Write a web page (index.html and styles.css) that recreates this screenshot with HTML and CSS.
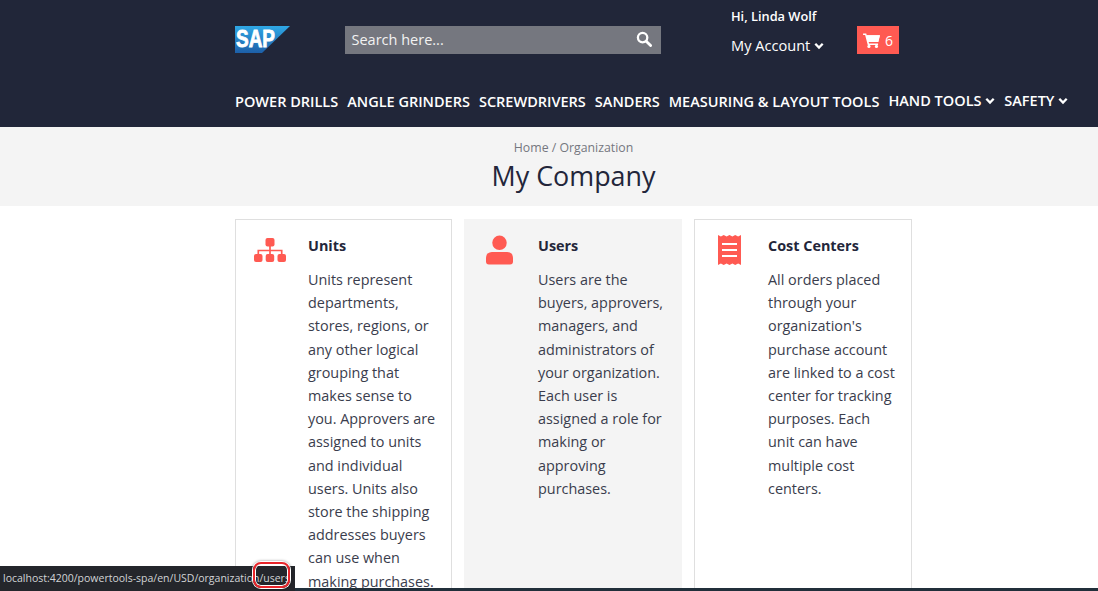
FILE: index.html
```html
<!DOCTYPE html>
<html lang="en">
<head>
<meta charset="utf-8">
<title>My Company</title>
<link rel="stylesheet" href="styles.css">
</head>
<body>
<header class="header">
  <div class="top">
    <svg class="logo" viewBox="0 0 55 27" width="55" height="27" aria-label="SAP">
      <defs><linearGradient id="sapg" x1="0" y1="0" x2="0" y2="1"><stop offset="0" stop-color="#2fa8e6"/><stop offset="1" stop-color="#1d5fa8"/></linearGradient></defs>
      <polygon points="0,0 55,0 27,27 0,27" fill="url(#sapg)"/>
      <text x="1" y="21" class="logo-text" textLength="39" lengthAdjust="spacingAndGlyphs">SAP</text>
    </svg>
    <div class="search">
      <span>Search here...</span>
      <svg class="search-icon" viewBox="0 0 16 16" width="16" height="16"><circle cx="6.6" cy="6.6" r="4.7" fill="none" stroke="#fff" stroke-width="2.3"/><path d="M10.2 10.2 14.6 14.6" stroke="#fff" stroke-width="2.8" stroke-linecap="round"/></svg>
    </div>
    <div class="account">
      <div class="hi">Hi, Linda Wolf</div>
      <div class="my">My Account <svg class="chev" viewBox="0 0 10 8" width="10" height="8"><path d="M1.3 1.8 5 5.6 8.7 1.8" fill="none" stroke="#fff" stroke-width="2.3"/></svg></div>
    </div>
    <div class="cart">
      <svg viewBox="0 0 18 16" width="17" height="15"><path d="M0 .5h3.4l.5 2H18l-1.8 7H6l.4 1.6h9.6v1.7H5L2.2 2.2H0z" fill="#fff"/><path d="M4 2.500h14l-1.800 7H6z" fill="#fff"/><circle cx="6.3" cy="14.3" r="1.7" fill="#fff"/><circle cx="14.3" cy="14.3" r="1.7" fill="#fff"/></svg>
      <span>6</span>
    </div>
  </div>
  <nav class="nav">
    <a>POWER DRILLS</a>
    <a>ANGLE GRINDERS</a>
    <a>SCREWDRIVERS</a>
    <a>SANDERS</a>
    <a>MEASURING &amp; LAYOUT TOOLS</a>
    <a class="drop">HAND TOOLS <svg class="chev" viewBox="0 0 10 8" width="10" height="8"><path d="M1.3 1.8 5 5.6 8.7 1.8" fill="none" stroke="#fff" stroke-width="2.3"/></svg></a>
    <a class="drop">SAFETY <svg class="chev" viewBox="0 0 10 8" width="10" height="8"><path d="M1.3 1.8 5 5.6 8.7 1.8" fill="none" stroke="#fff" stroke-width="2.3"/></svg></a>
  </nav>
</header>
<section class="band">
  <div class="crumbs">Home / Organization</div>
  <h1>My Company</h1>
</section>
<main class="cards">
  <article class="card">
    <div class="icon-col"><svg viewBox="0 0 32 24" width="32" height="24"><g fill="#ff5a52"><rect x="11.500" y="0" width="9" height="8.500" rx="2"/><rect x="0" y="16" width="8.500" height="8" rx="2"/><rect x="11.700" y="16" width="8.500" height="8" rx="2"/><rect x="23.500" y="16" width="8.500" height="8" rx="2"/></g><path d="M16 8v8M4.300 16v-3.500h23.400V16" fill="none" stroke="#ff5a52" stroke-width="1.700"/></svg></div>
    <div class="body">
      <h2>Units</h2>
      <p>Units represent departments, stores, regions, or any other logical grouping that makes sense to you. Approvers are assigned to units and individual users. Units also store the shipping addresses buyers can use when making purchases.</p>
    </div>
  </article>
  <article class="card active">
    <div class="icon-col"><svg viewBox="0 0 28 30" width="27" height="30"><circle cx="14" cy="7.500" r="7.500" fill="#ff5a52"/><path d="M6 17h16a6 6 0 0 1 6 6v4a3 3 0 0 1-3 3H3a3 3 0 0 1-3-3v-4a6 6 0 0 1 6-6z" fill="#ff5a52"/></svg></div>
    <div class="body">
      <h2>Users</h2>
      <p>Users are the buyers, approvers, managers, and administrators of your organization. Each user is assigned a role for making or approving purchases.</p>
    </div>
  </article>
  <article class="card">
    <div class="icon-col"><svg viewBox="0 0 23 30" width="23" height="30"><path d="M0 0l2.900 1.500L5.700 0l2.900 1.500L11.500 0l2.900 1.500L17.200 0l2.900 1.500L23 0v30l-2.900-1.500-2.900 1.500-2.800-1.500-2.900 1.500-2.900-1.500-2.900 1.500-2.800-1.500L0 30z" fill="#ff5a52"/><path d="M4 9h15M4 15h15M4 21h15" stroke="#fff" stroke-width="2"/></svg></div>
    <div class="body">
      <h2>Cost Centers</h2>
      <p>All orders placed through your organization's purchase account are linked to a cost center for tracking purposes. Each unit can have multiple cost centers.</p>
    </div>
  </article>
</main>
<div class="status"><span>localhost:4200/powertools-spa/en/USD/organization/users</span><i class="mark"></i></div>
<div class="edge"></div>
</body>
</html>
```
FILE: styles.css
```css
* { box-sizing: border-box; }
html, body { height: 100%; }
body {
  margin: 0;
  height: 591px;
  overflow: hidden;
  position: relative;
  background: #fff;
  color: #23263a;
  font-family: "Open Sans", "Liberation Sans", sans-serif;
}
.header {
  height: 127px;
  background: #212639;
  color: #fff;
  padding: 0 0 0 235px;
  display: flex;
  flex-direction: column;
}
.top {
  display: flex;
  align-items: flex-start;
  height: 89px;
}
.logo { margin-top: 26px; flex: none; }
.logo-text { font: 700 23px "Liberation Sans", sans-serif; fill: #fff; stroke: #fff; stroke-width: .8px; }
.search {
  margin: 26px 0 0 54.500px;
  width: 316.500px;
  height: 28px;
  background: #75777f;
  display: flex;
  align-items: center;
  justify-content: space-between;
  padding: 0 9px 2px 7px;
  font-size: 14.500px;
  color: #f2f2f2;
}
.account { margin: 7px 0 0 70px; width: 126px; }
.hi { font-size: 12.800px; font-weight: 600; line-height: 18px; }
.my { font-size: 14.600px; line-height: 20px; margin-top: 10px; }
.chev { display: inline-block; vertical-align: 1px; }
.cart {
  width: 42px;
  height: 28px;
  margin-top: 26px;
  background: #ff5a52;
  display: flex;
  align-items: center;
  justify-content: center;
  gap: 5px;
  font-size: 14px;
}
.nav {
  display: flex;
  gap: 9px;
  font-size: 14.500px;
  font-weight: 600;
  line-height: 26px;
}
.nav a { white-space: nowrap; }
.nav .drop { position: relative; top: -1px; }
.band {
  height: 79px;
  background: #f4f4f4;
  text-align: center;
  padding: 12px 186px 0 235px;
}
.crumbs { font-size: 12.300px; line-height: 18px; color: #75777f; }
h1 {
  margin: 1px 0 0;
  font-size: 26.900px;
  font-weight: 400;
  line-height: 36px;
  color: #23263a;
}
.cards {
  margin: 13px 0 0 235px;
  display: grid;
  grid-template-columns: 217px 218px 218px;
  column-gap: 12px;
}
.card {
  border: 1px solid #dfdfdf;
  height: 400px;
  padding: 15px 15px 0 0;
  display: flex;
}
.card.active { background: #f4f4f4; border-color: #f4f4f4; }
.icon-col {
  flex: none;
  width: 68px;
  height: 30px;
  display: flex;
  align-items: center;
  justify-content: center;
}
.body { flex: 1; min-width: 0; padding-left: 4px; }
.card + .card .body { padding-left: 5px; }
h2 { margin: 0; padding-top: 1px; font-size: 14.400px; font-weight: 700; line-height: 20px; color: #23263a; }
p { margin: 12px 0 0; font-size: 14.400px; line-height: 23.200px; color: #3a3d4d; }
.status {
  position: absolute;
  left: 0;
  bottom: 0;
  width: 295px;
  height: 25px;
  background: #24262b;
  color: #d2d4d6;
  font-size: 10.500px;
  line-height: 24px;
  padding-left: 3px;
  white-space: nowrap;
}
.mark {
  position: absolute;
  left: 253px;
  top: -4px;
  width: 37px;
  height: 26px;
  border: 2px solid #e8252a;
  border-radius: 8px;
  box-shadow: 0 0 0 1px #fff, inset 0 0 0 1px #fff, 0 0 3px 1px rgba(0, 0, 0, .4);
}
.edge {
  position: absolute;
  left: 295px;
  right: 0;
  bottom: 0;
  height: 3px;
  background: #212f3a;
}
```
